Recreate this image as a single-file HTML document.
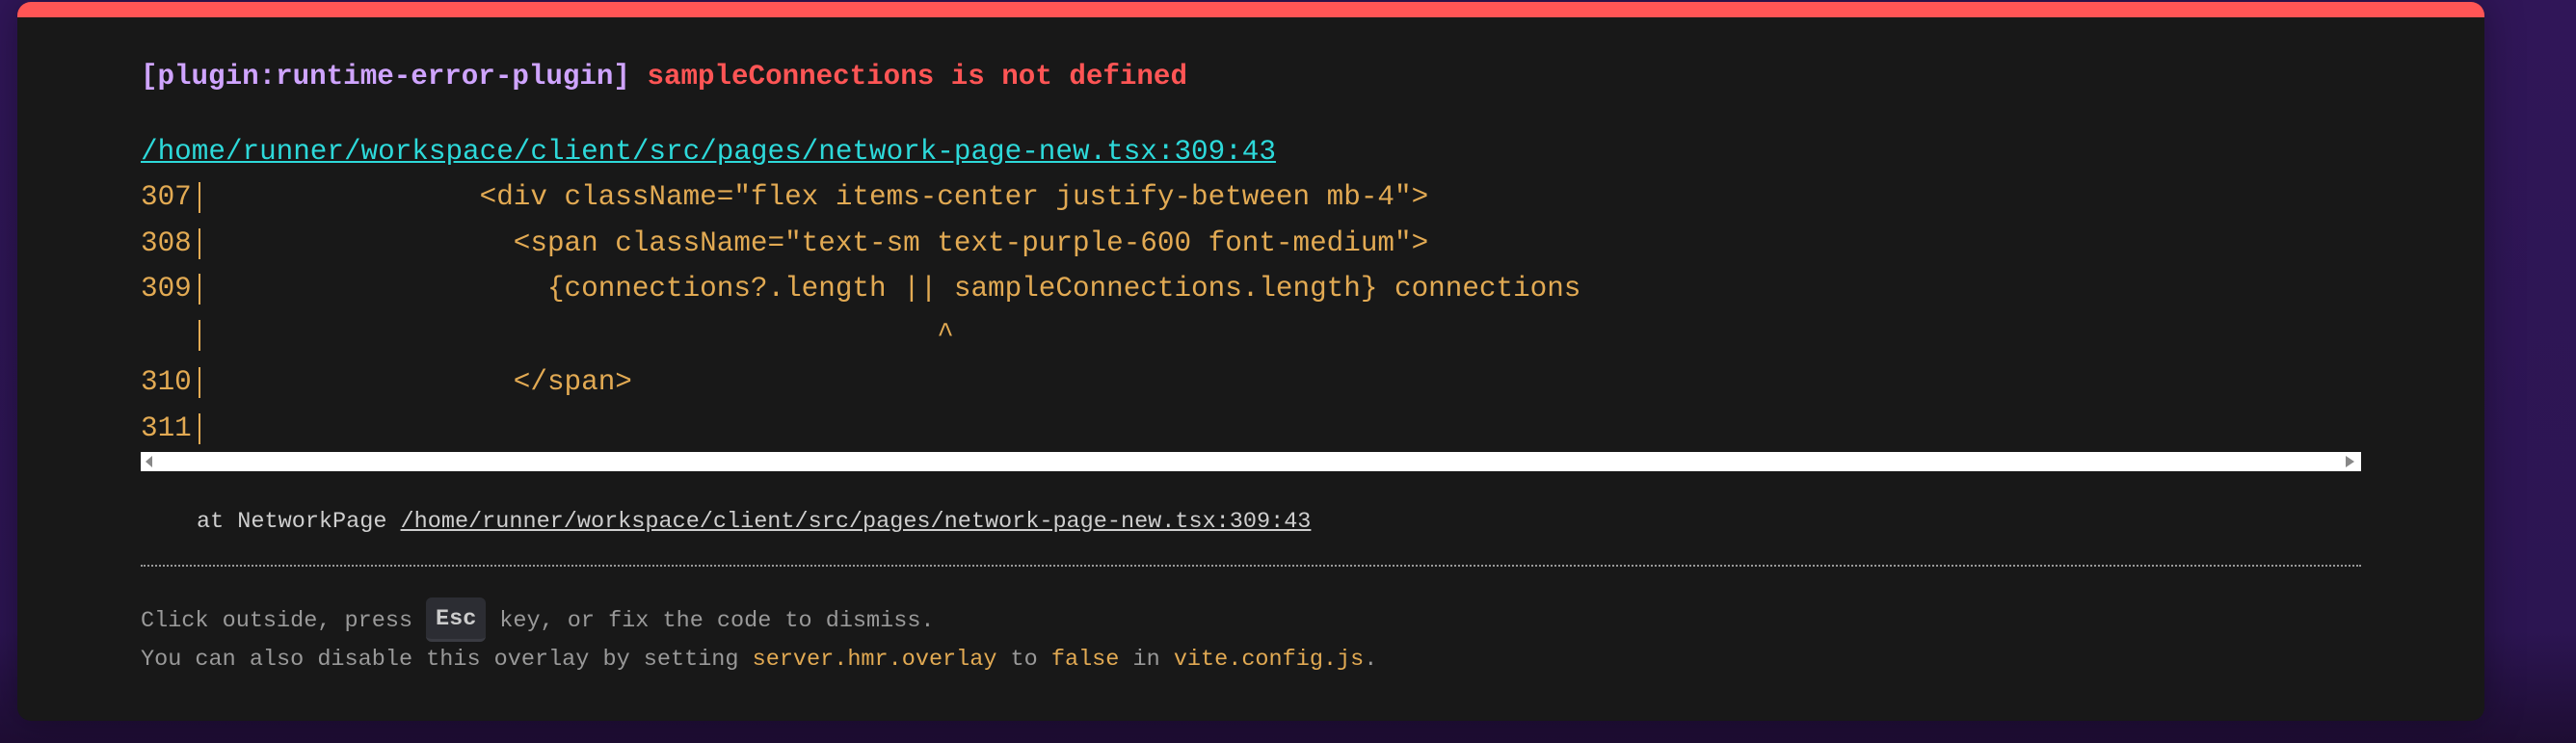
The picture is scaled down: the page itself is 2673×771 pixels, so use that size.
<!DOCTYPE html>
<html><head><meta charset="utf-8"><style>
html,body{margin:0;padding:0;width:2673px;height:771px;overflow:hidden;background:linear-gradient(180deg,#301658 0%,#2c1552 85%,#1e0d33 100%);}
.p{position:absolute;left:18px;top:2px;width:2560px;height:746px;background:#181818;border-radius:14px;overflow:hidden;box-shadow:0 0 40px rgba(0,0,0,.35)}
.bar{position:absolute;left:0;top:0;right:0;height:16px;background:#ff5555}
.l{position:absolute;white-space:pre;font-family:"Liberation Mono",monospace;}
.big{font-size:29.3px;line-height:40px;height:40px}
.sm{font-size:23.5px;line-height:32px;height:32px}
.y{color:#e2aa53}
.pipe{display:inline-block;width:1ch;height:40px;vertical-align:top;position:relative}
.pipe:before{content:"";position:absolute;left:7px;top:4px;width:2px;height:32px;background:#e2aa53}
</style></head><body>
<div class="p"><div class="bar"></div></div>
<div class="l big" style="left:146px;top:60px;font-weight:bold;font-size:29.2px"><span style="color:#cfa4ff">[plugin:runtime-error-plugin]</span> <span style="color:#ff5555">sampleConnections is not defined</span></div>
<div class="l big" style="left:146px;top:138px;color:#2dd9da;text-decoration:underline">/home/runner/workspace/client/src/pages/network-page-new.tsx:309:43</div>
<div class="l big y" style="left:146px;top:185px">307<span class="pipe"></span>                &lt;div className="flex items-center justify-between mb-4"&gt;</div>
<div class="l big y" style="left:146px;top:233px">308<span class="pipe"></span>                  &lt;span className="text-sm text-purple-600 font-medium"&gt;</div>
<div class="l big y" style="left:146px;top:280px">309<span class="pipe"></span>                    {connections?.length || sampleConnections.length} connections</div>
<div class="l big y" style="left:146px;top:328px">   <span class="pipe"></span>                                           ^</div>
<div class="l big y" style="left:146px;top:377px">310<span class="pipe"></span>                  &lt;/span&gt;</div>
<div class="l big y" style="left:146px;top:425px">311<span class="pipe"></span></div>
<div style="position:absolute;left:146px;top:469px;width:2304px;height:20px;background:#fff"></div>
<div style="position:absolute;left:151px;top:473px;width:0;height:0;border-top:6px solid transparent;border-bottom:6px solid transparent;border-right:7px solid #888"></div>
<div style="position:absolute;left:2434px;top:473px;width:0;height:0;border-top:6px solid transparent;border-bottom:6px solid transparent;border-left:9px solid #888"></div>
<div class="l sm" style="left:204px;top:526px;color:#cfcfcf">at NetworkPage <span style="text-decoration:underline">/home/runner/workspace/client/src/pages/network-page-new.tsx:309:43</span></div>
<div style="position:absolute;left:146px;top:586px;width:2304px;border-top:2px dotted #999"></div>
<div class="l sm" style="left:146px;top:621px;color:#999">Click outside, press <span style="display:inline-block;width:62px;height:46px;line-height:46px;text-align:center;background:#2c2d33;border-radius:6px;border-bottom:3px solid #3a3b42;box-sizing:border-box;color:#ccc;font-weight:bold;vertical-align:middle;position:relative;top:-1px">Esc</span> key, or fix the code to dismiss.</div>
<div class="l sm" style="left:146px;top:669px;color:#999">You can also disable this overlay by setting <span class="y">server.hmr.overlay</span> to <span class="y">false</span> in <span class="y">vite.config.js</span>.</div>
</body></html>
